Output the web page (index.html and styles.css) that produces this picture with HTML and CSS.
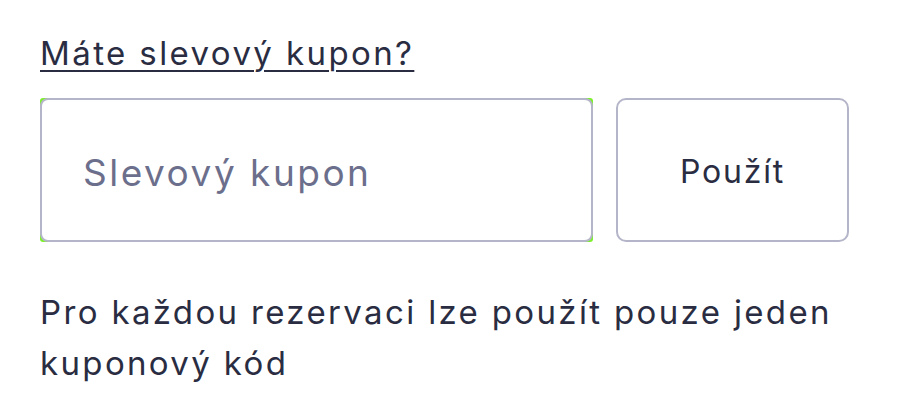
FILE: index.html
```html
<!DOCTYPE html>
<html lang="cs">
<head>
<meta charset="utf-8">
<link rel="stylesheet" href="styles.css">
</head>
<body>
<div class="coupon">
  <a class="coupon-link" href="#">Máte slevový kupon?</a>
  <div class="coupon-row">
    <div class="field-wrap">
      <input class="field" type="text" placeholder="Slevový kupon">
    </div>
    <button class="apply" type="button">Použít</button>
  </div>
  <p class="note">Pro každou rezervaci lze použít pouze jeden kuponový kód</p>
</div>
</body>
</html>
```
FILE: styles.css
```css
html, body {
  margin: 0;
  padding: 0;
  background: #ffffff;
}
body {
  font-family: Inter, "Noto Sans", sans-serif;
  color: #2a2d42;
}
.coupon {
  padding: 31px 40px 0 40px;
  width: 820px;
}
.coupon-link {
  display: inline-block;
  font-size: 33px;
  line-height: 44px;
  letter-spacing: 2.4px;
  color: #2a2d42;
  text-decoration: underline;
  text-decoration-thickness: 2px;
  text-underline-offset: 5px;
}
.coupon-row {
  display: flex;
  gap: 23px;
  margin-top: 23px;
}
.field-wrap {
  width: 553px;
  height: 144px;
  background: #7cf02a;
  border-radius: 3px;
}
.field {
  box-sizing: border-box;
  width: 100%;
  height: 100%;
  margin: 0;
  border: 2px solid #b4b5c9;
  border-radius: 8px;
  background: #ffffff;
  padding: 4px 41px 0 41px;
  font-family: inherit;
  font-size: 37px;
  letter-spacing: 2.5px;
  color: #2a2d42;
  outline: none;
}
.field::placeholder {
  color: #6c6f8c;
}
.apply {
  box-sizing: border-box;
  width: 233px;
  height: 144px;
  padding-top: 3px;
  border: 2px solid #b4b5c9;
  border-radius: 10px;
  background: #ffffff;
  font-family: inherit;
  font-size: 32px;
  letter-spacing: 1.8px;
  color: #2a2d42;
  cursor: pointer;
}
.note {
  margin: 45px 0 0 0;
  font-size: 33px;
  line-height: 51px;
  letter-spacing: 2.35px;
  color: #2a2d42;
}
```
